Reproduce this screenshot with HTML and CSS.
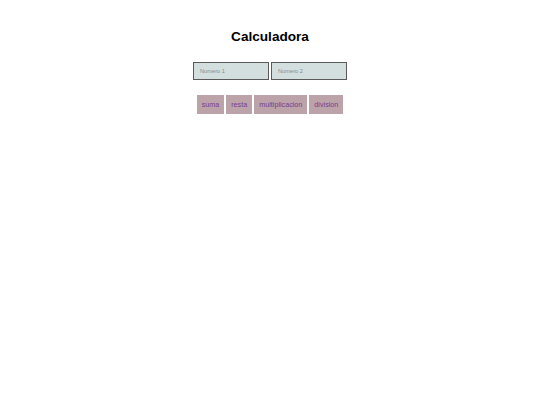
FILE: index.html
```html
<!DOCTYPE html>
<html lang="es">
<head>
<meta charset="utf-8">
<title>Calculadora</title>
<link rel="stylesheet" href="styles.css">
</head>
<body>
<main class="calc">
  <h1 class="calc-title">Calculadora</h1>
  <div class="calc-inputs">
    <input class="calc-field" type="text" placeholder="Numero 1">
    <input class="calc-field" type="text" placeholder="Numero 2">
  </div>
  <div class="calc-ops">
    <button class="calc-op">suma</button>
    <button class="calc-op">resta</button>
    <button class="calc-op">multiplicacion</button>
    <button class="calc-op">division</button>
  </div>
</main>
</body>
</html>
```
FILE: styles.css
```css
html, body {
  margin: 0;
  padding: 0;
  background: #ffffff;
  font-family: "Liberation Sans", Arial, sans-serif;
}

.calc {
  display: flex;
  flex-direction: column;
  align-items: center;
  padding-top: 28px;
}

.calc-title {
  margin: 0;
  font-size: 13.6px;
  font-weight: bold;
  color: #000000;
  line-height: 18px;
}

.calc-inputs {
  display: flex;
  gap: 2px;
  margin-top: 16px;
}

.calc-field {
  box-sizing: border-box;
  width: 76px;
  height: 18px;
  margin: 0;
  padding: 0 6px;
  border: 1px solid #5a5a5a;
  border-top-width: 1.5px;
  border-left-width: 1.5px;
  background: #d3dfdf;
  font-family: inherit;
  font-size: 5.7px;
  color: #333333;
  outline: none;
}

.calc-field::placeholder {
  color: #858d8d;
}

.calc-ops {
  display: flex;
  gap: 2px;
  margin-top: 15px;
}

.calc-op {
  box-sizing: border-box;
  height: 19px;
  margin: 0;
  padding: 0 5px;
  border: none;
  background: #bca2a9;
  color: #7b3d8f;
  font-family: inherit;
  font-size: 7.2px;
  cursor: pointer;
}
```
